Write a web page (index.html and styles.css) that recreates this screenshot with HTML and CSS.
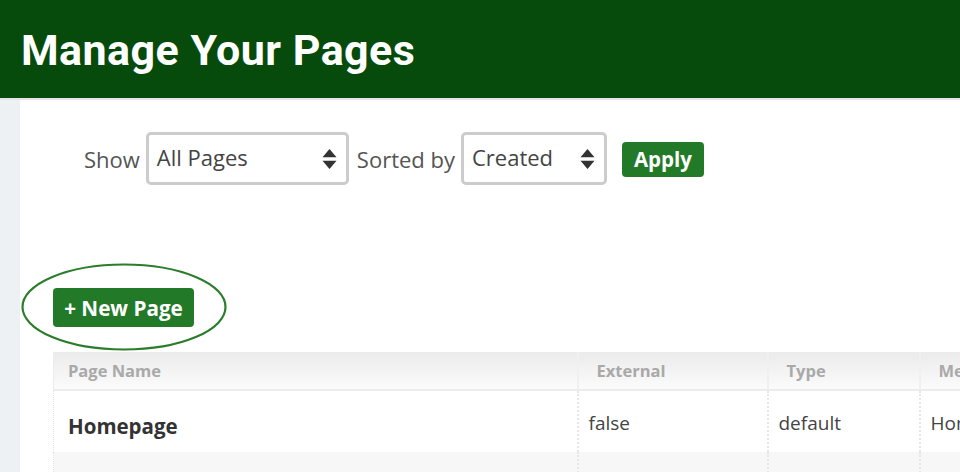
FILE: index.html
```html
<!DOCTYPE html>
<html lang="en">
<head>
<meta charset="utf-8">
<title>Manage Your Pages</title>
<link rel="stylesheet" href="styles.css">
</head>
<body>
<header class="topbar">
  <h1 class="title">Manage Your Pages</h1>
</header>
<div class="layout">
  <aside class="strip"></aside>
  <main class="content">
    <form class="filters">
      <label class="flabel">Show</label>
      <div class="select select-show">
        <span class="select-value">All Pages</span>
        <svg class="arrows" width="15" height="22" viewBox="0 0 15 22"><path d="M7.5 1 L14.5 9.2 L0.5 9.2 Z M0.5 12.8 L14.5 12.8 L7.5 21 Z" fill="#333"/></svg>
      </div>
      <label class="flabel">Sorted by</label>
      <div class="select select-sort">
        <span class="select-value">Created</span>
        <svg class="arrows" width="15" height="22" viewBox="0 0 15 22"><path d="M7.5 1 L14.5 9.2 L0.5 9.2 Z M0.5 12.8 L14.5 12.8 L7.5 21 Z" fill="#333"/></svg>
      </div>
      <button type="button" class="btn btn-apply">Apply</button>
    </form>

    <div class="newpage-wrap">
      <button type="button" class="btn btn-new">+ New Page</button>
      <svg class="circle-mark" width="206" height="88" viewBox="0 0 206 88"><ellipse cx="103" cy="44" rx="101.5" ry="42.5" fill="none" stroke="#2b7d2b" stroke-width="2.2"/></svg>
    </div>

    <div class="table-wrap">
      <table class="pages">
        <thead>
          <tr>
            <th class="c-name">Page Name</th>
            <th class="c-ext">External</th>
            <th class="c-type">Type</th>
            <th class="c-menu">Menu</th>
          </tr>
        </thead>
        <tbody>
          <tr>
            <td class="c-name"><strong>Homepage</strong></td>
            <td class="c-ext">false</td>
            <td class="c-type">default</td>
            <td class="c-menu">Home</td>
          </tr>
          <tr class="alt">
            <td class="c-name"></td>
            <td class="c-ext"></td>
            <td class="c-type"></td>
            <td class="c-menu"></td>
          </tr>
        </tbody>
      </table>
    </div>
  </main>
</div>
</body>
</html>
```

FILE: styles.css
```css
* { box-sizing: border-box; }

html, body {
  margin: 0;
  padding: 0;
  height: 100%;
  overflow: hidden;
  background: #ffffff;
  font-family: "Open Sans", "Noto Sans", sans-serif;
  color: #555555;
}

.topbar {
  height: 100px;
  background: #064b0b;
  border-bottom: 2px solid #e3e5e7;
  padding-left: 21px;
  display: flex;
  align-items: flex-start;
}

.title {
  margin: 0;
  padding-top: 24px;
  font-family: "Roboto", "Liberation Sans", sans-serif;
  font-weight: 700;
  font-size: 43px;
  line-height: 52px;
  letter-spacing: 0.45px;
  color: #ffffff;
}

.layout {
  display: flex;
  height: calc(100% - 100px);
}

.strip {
  width: 20px;
  flex: none;
  background: #eef1f4;
}

.content {
  flex: 1;
  min-width: 0;
  background: #ffffff;
  overflow: hidden;
}

.filters {
  display: flex;
  align-items: center;
  padding: 32px 0 0 64px;
  height: 85px;
  margin: 0;
}

.flabel {
  font-size: 22px;
  color: #555;
  margin-right: 6px;
}

.select {
  height: 53px;
  border: 3px solid #cccccc;
  border-radius: 5px;
  display: flex;
  align-items: center;
  justify-content: space-between;
  padding: 0 9px 0 8px;
  margin-right: 8px;
  background: #fff;
  flex: none;
}

.select-show { width: 203px; }
.select-sort { width: 146px; margin-right: 15px; }

.select-value {
  font-size: 22px;
  color: #444;
  margin-top: -3px;
}

.arrows { display: block; margin-top: 1px; }

.btn {
  border: none;
  background: #227a29;
  color: #ffffff;
  font-family: "Open Sans", "Noto Sans", sans-serif;
  font-weight: 700;
  font-size: 20px;
  border-radius: 4px;
  cursor: pointer;
}

.btn-apply {
  height: 35px;
  width: 82px;
  padding: 0;
  line-height: 35px;
  margin-top: 2px;
  font-size: 20.5px;
}

.newpage-wrap {
  position: relative;
  margin: 103px 0 0 33px;
  width: 141px;
  height: 39px;
}

.btn-new {
  display: block;
  width: 141px;
  height: 39px;
  padding: 0;
  line-height: 38px;
  font-size: 20.7px;
}

.circle-mark {
  position: absolute;
  left: -32px;
  top: -25px;
  pointer-events: none;
}

.table-wrap {
  margin: 25px 0 0 33px;
  overflow: hidden;
}

.pages {
  border-collapse: collapse;
  table-layout: fixed;
  width: 1100px;
}

.c-name { width: 524px; }
.c-ext  { width: 190px; }
.c-type { width: 152px; }
.c-menu { width: 234px; }

.pages th {
  height: 38px;
  text-align: left;
  font-size: 16.5px;
  font-weight: 700;
  color: #a9a9a9;
  padding: 0 0 0 18px;
  background: linear-gradient(#ebebeb, #fbfbfb);
  border-left: 2px solid #f0f0f0;
  border-bottom: 2px solid #ececec;
  vertical-align: middle;
}

.pages th.c-name { padding-left: 14px; border-left: 1px solid #ececec; }

.pages td {
  height: 62px;
  padding: 2px 0 0 10px;
  font-size: 19px;
  color: #444;
  border-left: 2px dotted #e6e6e6;
  vertical-align: middle;
}

.pages td.c-name {
  padding-left: 14px;
  padding-top: 8px;
  padding-bottom: 0;
  border-left: 1px dotted #e3e3e3;
}

.pages td strong {
  font-size: 20.5px;
  font-weight: 700;
  color: #333;
}

.pages tr.alt td {
  background: #f7f7f7;
  height: 40px;
  padding: 0;
}
```
